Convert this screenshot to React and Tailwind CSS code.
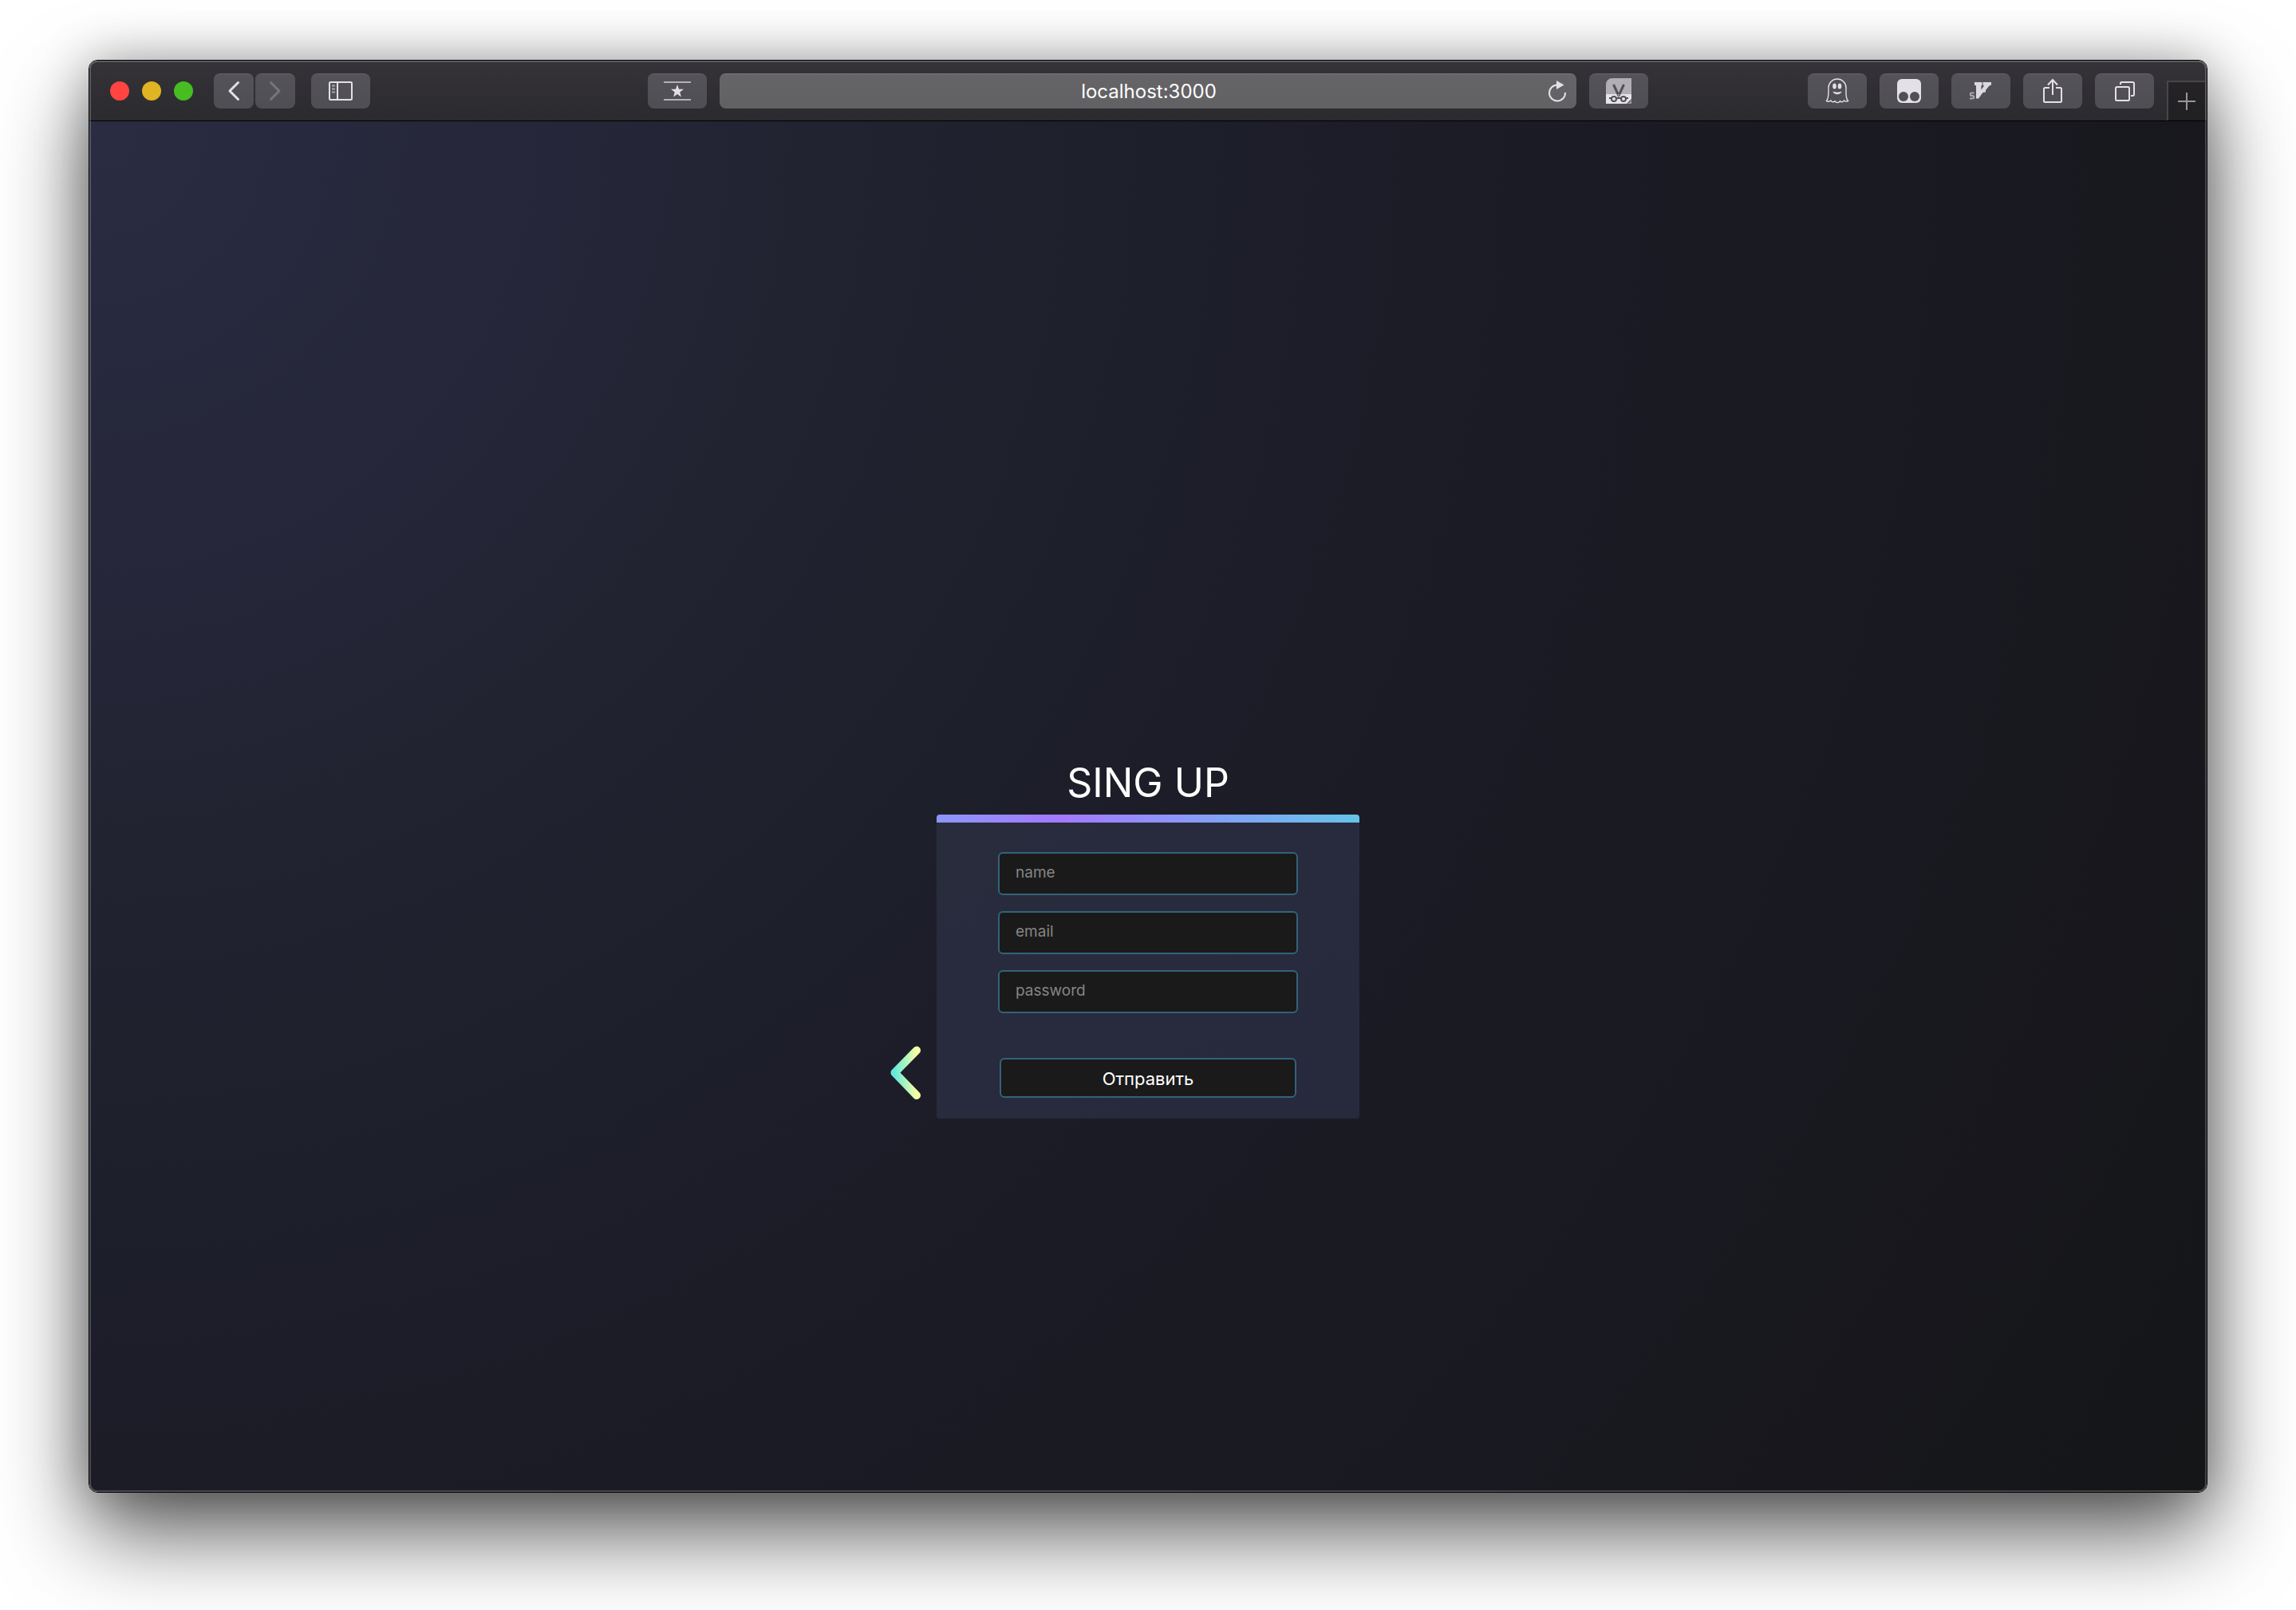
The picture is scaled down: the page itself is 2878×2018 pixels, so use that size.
import React from "react";

const fontStack = "font-['Inter','Open_Sans',sans-serif]";

function ToolButton({ label, children, className = "w-[74px]", icon = "text-[#e3e1e7]" }) {
  return (
    <button
      type="button"
      aria-label={label}
      className={`flex h-11 shrink-0 items-center justify-center rounded-lg border-t border-[#656469] bg-linear-to-b from-[#55535a] to-[#4f4e53] ${icon} ${className}`}
    >
      {children}
    </button>
  );
}

function Toolbar() {
  return (
    <header className="flex h-[76px] shrink-0 items-center border-b border-black bg-linear-to-b from-[#353338] to-[#2b2a2e]">
      <div className="flex flex-1 items-center">
        <div className="ml-[26px] flex gap-4">
          <button type="button" aria-label="Close" className="size-6 rounded-full bg-[#ff4442]" />
          <button type="button" aria-label="Minimize" className="size-6 rounded-full bg-[#e0b422]" />
          <button type="button" aria-label="Zoom" className="size-6 rounded-full bg-[#47bd22]" />
        </div>
        <div className="ml-[26px] flex gap-0.5">
          <ToolButton label="Back" className="w-[50px]">
            <svg width="16" height="26" viewBox="0 0 16 26" fill="none" stroke="currentColor" strokeWidth="3" strokeLinecap="round" strokeLinejoin="round">
              <path d="M13.5 2.5 3 13l10.500 10.500" />
            </svg>
          </ToolButton>
          <ToolButton label="Forward" className="w-[50px]" icon="text-[#77757b]">
            <svg width="16" height="26" viewBox="0 0 16 26" fill="none" stroke="currentColor" strokeWidth="3" strokeLinecap="round" strokeLinejoin="round">
              <path d="M2.500 2.500 13 13 2.500 23.500" />
            </svg>
          </ToolButton>
        </div>
        <ToolButton label="Show sidebar" className="ml-5 w-[74px]">
          <svg width="30" height="24" viewBox="0 0 30 24" fill="none" stroke="currentColor" strokeWidth="2">
            <rect x="1" y="1" width="28" height="22" rx="1.500" />
            <path d="M11 1v22" />
            <path d="M4 5.500h4M4 9.500h4M4 13.500h4" stroke="#a9a7ad" />
          </svg>
        </ToolButton>
      </div>

      <div className="flex w-[1254px] items-center gap-4">
        <ToolButton label="Favourites">
          <svg width="34" height="26" viewBox="0 0 34 26">
            <path d="M0 2h34M0 24h34" stroke="#b3b1b6" strokeWidth="2" />
            <path fill="currentColor" d="m17 5 2 5.700 6 .1-4.800 3.700 1.700 5.900L17 17l-4.900 3.400 1.700-5.900L9 10.800l6-.1z" />
          </svg>
        </ToolButton>
        <div className="flex h-11 flex-1 items-center rounded-lg border-t border-[#7b7a7d] bg-linear-to-b from-[#666467] to-[#616163]">
          <input
            aria-label="Address"
            defaultValue="localhost:3000"
            className="h-full min-w-0 flex-1 bg-transparent pl-11 text-center text-2xl text-white outline-none"
          />
          <button type="button" aria-label="Reload" className="mr-1.5 flex size-9 items-center justify-center text-[#e3e1e7]">
            <svg width="24" height="28" viewBox="0 0 24 28">
              <path d="M12 6.500A10 10 0 1 0 22 16" fill="none" stroke="currentColor" strokeWidth="2" />
              <path d="M11 1v11l9.500-5.500z" fill="currentColor" />
            </svg>
          </button>
        </div>
        <ToolButton label="Scissors extension">
          <svg width="32" height="32" viewBox="0 0 32 32">
            <path d="M8 0h24v20H0V8a8 8 0 0 1 8-8z" fill="#b1afb4" />
            <path d="M0 20h32v6l-6 6H0z" fill="#e6e4ea" />
            <path d="M32 25v7h-7a7 7 0 0 0 7-7z" fill="#9d9ba0" />
            <path d="m10 9 6 13M22 9l-6 13" stroke="#535157" strokeWidth="3" strokeLinecap="round" />
            <path d="m15 20 1 4 1-4z" fill="#b1afb4" />
            <g fill="none" stroke="#535157" strokeWidth="2">
              <circle cx="10" cy="26" r="3" />
              <circle cx="22" cy="26" r="3" />
              <path d="M4 25h3M13 25h6M25 25h3" />
            </g>
          </svg>
        </ToolButton>
      </div>

      <div className="flex flex-1 items-center justify-end self-stretch">
        <div className="flex gap-4">
          <ToolButton label="Ghost extension">
            <svg width="30" height="34" viewBox="0 0 30 34">
              <path
                d="M4 17V13a11 11 0 0 1 22 0v7c0 5 .6 7 2.500 9.500-2 1-3.500 1-5-.5-1.200 2-3.500 2.500-5 .7-1.500 2.600-5 2.600-6.500 0-1.500 1.800-4 1.300-5-.7-1.500 1.500-3.500 1.500-5.500.5C3.500 27 4 23 4 17z"
                fill="none" stroke="currentColor" strokeWidth="1.400"
              />
              <ellipse cx="11.500" cy="11" rx="2.300" ry="3.500" fill="currentColor" />
              <ellipse cx="18" cy="11" rx="2.300" ry="3.500" fill="currentColor" />
              <path d="M9.500 17.500c3 1.500 8 1.500 11 0-1 5-10 5-11 0z" fill="currentColor" />
            </svg>
          </ToolButton>
          <ToolButton label="Script extension">
            <svg width="30" height="30" viewBox="0 0 30 30">
              <rect width="30" height="30" rx="6" fill="currentColor" />
              <circle cx="8" cy="22" r="6" fill="#525056" />
              <circle cx="22" cy="22" r="6" fill="#525056" />
            </svg>
          </ToolButton>
          <ToolButton label="Video extension">
            <svg width="28" height="24" viewBox="0 0 28 24">
              <path d="M6 1h9.500v3.500L14.500 5.500v5l3.500-5-1.500-1V1H27v3.500L24.500 5.500 20 11v2.500l-3.500.5-5.500 7.500H8V5.500L6 4.500z" fill="#dbd9df" />
              <path d="M5.500 14.500H2.500a1.500 1.500 0 0 0 0 3.500h1a1.500 1.500 0 0 1 0 3.500H0" fill="none" stroke="#aaa8ae" strokeWidth="2" />
            </svg>
          </ToolButton>
          <ToolButton label="Share">
            <svg width="24" height="32" viewBox="0 0 24 32" fill="none" stroke="currentColor" strokeWidth="2">
              <path d="M8 12H2.500A1.500 1.500 0 0 0 1 13.500v15A1.500 1.500 0 0 0 2.500 30h19a1.500 1.500 0 0 0 1.500-1.500v-15a1.500 1.500 0 0 0-1.500-1.500H16" />
              <path d="M12 21V3M6 8.500 12 2l6 6.500" />
            </svg>
          </ToolButton>
          <ToolButton label="Show tabs">
            <svg width="26" height="26" viewBox="0 0 26 26" fill="none" stroke="currentColor" strokeWidth="2">
              <rect x="2" y="8" width="17" height="17" rx="1.500" />
              <path d="M8 5V3.500A1.500 1.500 0 0 1 9.500 2h14A1.500 1.500 0 0 1 25 3.500v14a1.500 1.500 0 0 1-1.500 1.500H21" />
            </svg>
          </ToolButton>
        </div>
        <button
          type="button"
          aria-label="New tab"
          className="mr-0.5 ml-4 flex h-[50px] w-12 items-center justify-center self-end border-t-2 border-l-2 border-[#47464b] bg-linear-to-b from-[#252326] to-[#201f22] text-[#97969a]"
        >
          <svg width="22" height="22" viewBox="0 0 22 22" stroke="currentColor" strokeWidth="2">
            <path d="M11 0v22M0 11h22" />
          </svg>
        </button>
      </div>
    </header>
  );
}

function Field({ name, type }) {
  return (
    <input
      name={name}
      type={type}
      aria-label={name}
      placeholder={name}
      className="h-[54px] w-full rounded-md border-2 border-[#31637a] bg-[#1a1a1a] px-5 pb-1 text-[19px] text-white outline-none placeholder:text-[#858585]"
    />
  );
}

function SignUp() {
  return (
    <main className="flex flex-1 flex-col items-center justify-center bg-[radial-gradient(circle_farthest-corner_at_top_left,#2a2c42_0%,#252639_18%,#212330_30%,#1d1f2b_42%,#1c1c27_54%,#18181f_80%,#151618_100%)] pt-[329px]">
      <div className="relative w-[530px]">
        <h1 className="mb-2 text-center text-[50px] leading-16 text-white">SING UP</h1>
        <form className="overflow-hidden rounded-sm bg-linear-to-br from-[#292c3d] to-[#27293d]">
          <div className="h-2.5 bg-[linear-gradient(90deg,#8c96f8_0%,#a478ff_29%,#8c96f8_57%,#64c4e8_100%)]" />
          <div className="flex flex-col gap-5 px-[77px] pt-[37px]">
            <Field name="name" type="text" />
            <Field name="email" type="email" />
            <Field name="password" type="password" />
          </div>
          <div className="px-[79px] pt-14 pb-[26px]">
            <button type="submit" className="h-[50px] w-full rounded-md border-2 border-[#31637a] bg-[#1a1a1a] pt-0.5 text-[22px] leading-7 text-white">
              Отправить
            </button>
          </div>
        </form>
        <a href="#back" aria-label="Back" className="absolute right-full bottom-6 mr-5">
          <svg width="38" height="68" viewBox="0 0 38 68" fill="none">
            <defs>
              <linearGradient id="arrow" x1="0" y1="0" x2="1" y2="0">
                <stop offset="0" stopColor="#66e8dc" />
                <stop offset="1" stopColor="#f6ffa4" />
              </linearGradient>
            </defs>
            <path d="M33 6.500 5.500 34.500 33 63" stroke="url(#arrow)" strokeWidth="10" strokeLinecap="round" strokeLinejoin="round" />
          </svg>
        </a>
      </div>
    </main>
  );
}

export default function App() {
  return (
    <div className={`flex min-h-screen bg-white px-[111px] pt-[75px] pb-[147px] antialiased ${fontStack}`}>
      <div className="flex flex-1 rounded-[11px] border border-black shadow-[0_50px_110px_rgba(0,0,0,0.65),0_0_60px_rgba(0,0,0,0.25)]">
        <div className="relative flex flex-1 flex-col overflow-hidden rounded-[10px]">
          <Toolbar />
          <SignUp />
          <div className="pointer-events-none absolute inset-0 rounded-[10px] border-2 border-white/20" />
        </div>
      </div>
    </div>
  );
}
